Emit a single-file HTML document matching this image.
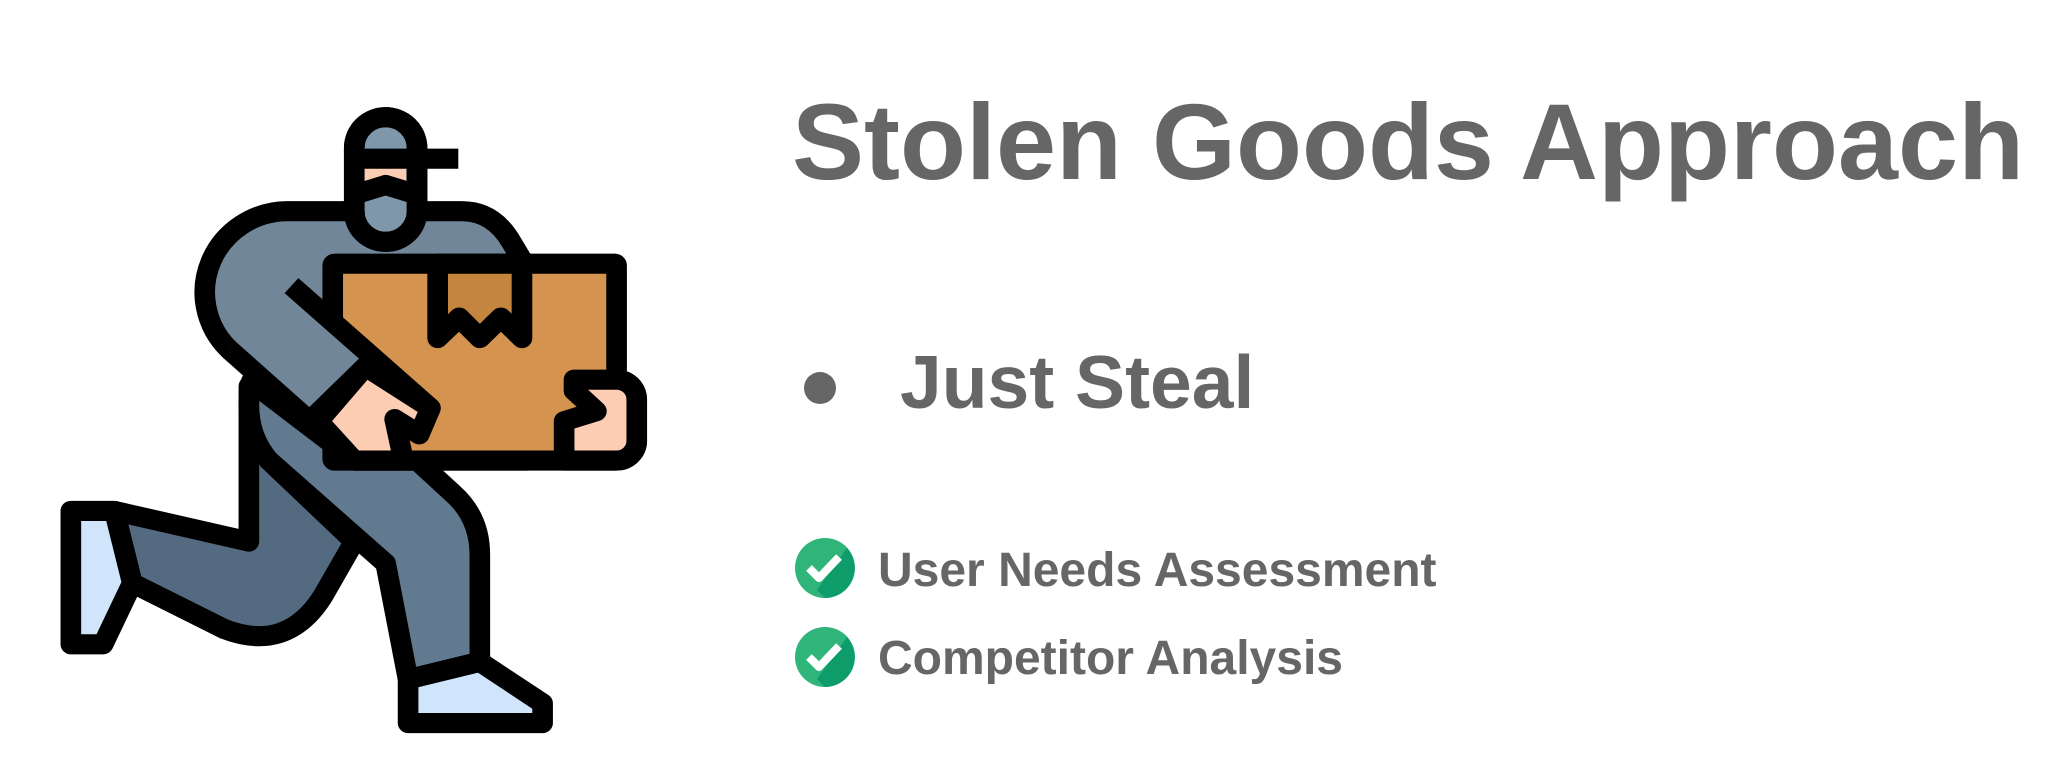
<!DOCTYPE html>
<html><head><meta charset="utf-8"><style>
html,body{margin:0;padding:0;background:#fff;width:2048px;height:765px;overflow:hidden;position:relative;font-family:"Liberation Sans",Arial,sans-serif;color:#666;font-weight:bold}
.t{position:absolute;white-space:nowrap;line-height:1}
</style></head><body>
<svg style="position:absolute;left:0;top:80px" width="700" height="668" viewBox="0 0 1561 1527" preserveAspectRatio="none">
<g stroke="#000" stroke-width="46" stroke-linejoin="round" stroke-linecap="round">
<path d="M555,700 V1055 L255,985 L295,1150 L500,1255 Q640,1310 720,1180 L790,1055 L600,870 Z" fill="#546a80"/>
<path d="M158,985 H255 L295,1150 L230,1290 H158 Z" fill="#d0e4fc"/>
<path d="M560,690 Q540,800 600,870 L860,1105 L910,1370 L1070,1330 V1085 Q1070,1000 1010,945 L930,870 L790,870 Z" fill="#627a90"/>
<path d="M910,1370 L1070,1330 L1210,1425 V1470 H910 Z" fill="#d0e4fc"/>
<path d="M640,300 H1030 Q1100,300 1140,370 L1175,430 L1175,870 L790,870 L510,615 A185,185 0 0 1 640,300 Z" fill="#718799"/>
<path d="M790,300 V155 A70,70 0 0 1 930,155 V300 A70,70 0 0 1 790,300 Z" fill="#7f97aa"/>
</g>
<rect x="812" y="195" width="94" height="50" fill="#fccdb3"/>
<g stroke="#000" stroke-width="46" stroke-linejoin="round" fill="none">
<path d="M790,300 V155 A70,70 0 0 1 930,155 V300 A70,70 0 0 1 790,300 Z"/>
<path d="M790,180 H1022"/>
<path d="M790,262 L860,240 L930,262"/>
<rect x="742" y="420" width="633" height="450" rx="4" fill="#d4944f"/>
<path d="M976,420 V590 L1024,543 L1070,590 L1117,543 L1164,590 V420 Z" fill="#c4853f"/>
<path d="M1258,870 V780 L1330,757 L1280,710 V685 H1375 A45,45 0 0 1 1420,730 V825 A45,45 0 0 1 1375,870 Z" fill="#fccdb3"/>
</g>
<path d="M650,470 L830,640 L710,780 L510,615 Z" fill="#718799"/>
<path d="M815,655 L960,750 L935,810 L880,775 L900,870 L790,870 L710,780 Z" fill="#fccdb3" stroke="#000" stroke-width="46" stroke-linejoin="round"/>
<g stroke="#000" stroke-width="46" stroke-linecap="butt" fill="none" stroke-linejoin="round">
<path d="M650,470 L960,750"/>
<path d="M815,655 L700,770"/>
<path d="M510,615 L790,870"/>
</g>
</svg>
<div class="t" style="left:792px;top:88px;font-size:108px">Stolen Goods Approach</div>
<div style="position:absolute;left:804px;top:372px;width:32px;height:32px;border-radius:50%;background:#666"></div>
<div class="t" style="left:900px;top:345px;font-size:75px">Just Steal</div>
<svg style="position:absolute;left:795px;top:538px" width="60" height="60" viewBox="0 0 60 60"><circle cx="30" cy="30" r="30" fill="#2fb47a"/><path d="M30,60 A30,30 0 0 0 52,10 L22,52 Z" fill="#0d9c6a"/><path d="M14,30 L24,40 L44,19" stroke="#fff" stroke-width="8" fill="none" stroke-linejoin="round"/></svg>
<div class="t" style="left:878px;top:547px;font-size:48px">User Needs Assessment</div>
<svg style="position:absolute;left:795px;top:627px" width="60" height="60" viewBox="0 0 60 60"><circle cx="30" cy="30" r="30" fill="#2fb47a"/><path d="M30,60 A30,30 0 0 0 52,10 L22,52 Z" fill="#0d9c6a"/><path d="M14,30 L24,40 L44,19" stroke="#fff" stroke-width="8" fill="none" stroke-linejoin="round"/></svg>
<div class="t" style="left:878px;top:635px;font-size:48px">Competitor Analysis</div>
</body></html>
